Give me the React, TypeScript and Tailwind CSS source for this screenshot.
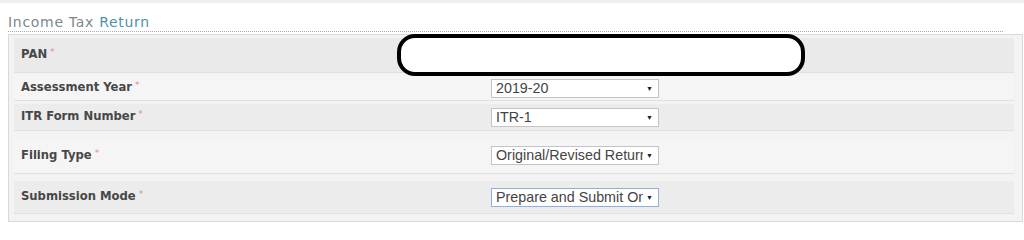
import React from 'react';

type Row = {
  label: string;
  value?: string;
  h: string;
  bg: string;
  focused?: boolean;
};

const rows: Row[] = [
  { label: 'PAN', h: 'h-[35px]', bg: 'bg-[#eaeaea]' },
  { label: 'Assessment Year', value: '2019-20', h: 'h-[25px]', bg: 'bg-[#f5f5f5]' },
  { label: 'ITR Form Number', value: 'ITR-1', h: 'h-[27px]', bg: 'bg-[#ececec]' },
  { label: 'Filing Type', value: 'Original/Revised Return', h: 'h-[36px]', bg: 'bg-[#f5f5f5]' },
  { label: 'Submission Mode', value: 'Prepare and Submit Online', h: 'h-[33px]', bg: 'bg-[#ececec]', focused: true },
];

function FakeSelect({ value, focused }: { value: string; focused?: boolean }) {
  return (
    <div
      className={`w-[168px] h-[19px] bg-white border flex items-center pl-[4px] pr-[5px] ${
        focused ? 'border-[#8fb0dc]' : 'border-[#c4c4c4]'
      }`}
    >
      <span className="flex-1 min-w-0 overflow-hidden whitespace-nowrap text-[14.3px] leading-[17px] text-[#444] font-['Liberation_Sans',Arial,sans-serif]">
        {value}
      </span>
      <span className="shrink-0 text-[7px] leading-none text-[#222] ml-[3px]">▼</span>
    </div>
  );
}

export default function App() {
  return (
    <div className="w-[1024px] h-[223px] bg-white overflow-hidden">
      <div className="h-[3px] bg-[#efefef]" />

      {/* Section title */}
      <div className="ml-2 mr-[21px] pt-[11px] pb-[1px] border-b border-dotted border-[#a9a9a9]">
        <h1 className="text-[14px] leading-[16px] font-['DejaVu_Sans',sans-serif] text-[#7a8a8e] tracking-[0.7px]">
          Income Tax <span className="text-[#4d93aa]">Return</span>
        </h1>
      </div>

      {/* Form panel */}
      <div className="ml-2 mr-[1px] mt-[2px] h-[188px] border border-[#d9d9d9] bg-[#f3f3f3] pl-[5px] pr-[8px] pt-[3px] flex flex-col">
        {rows.map((r, i) => (
          <div
            key={r.label}
            className={`relative flex items-center ${r.h} ${r.bg} border-b border-[#e1e1e1] ${
              i === 0 || i === 1 ? 'mb-[3px]' : 'mb-[7px]'
            }`}
          >
            <div className="w-[477px] pl-[7px] text-[11.6px] font-bold text-[#474747] font-['DejaVu_Sans',sans-serif]">
              {r.label}
              <span className="text-[#e08a8a] font-normal text-[9px] ml-[3px] align-top">*</span>
            </div>
            {r.value && <FakeSelect value={r.value} focused={r.focused} />}
            {i === 0 && (
              <div className="absolute left-[383px] top-[-4px] w-[408px] h-[42px] bg-white border-[4px] border-black rounded-[18px]" />
            )}
          </div>
        ))}
      </div>
    </div>
  );
}
